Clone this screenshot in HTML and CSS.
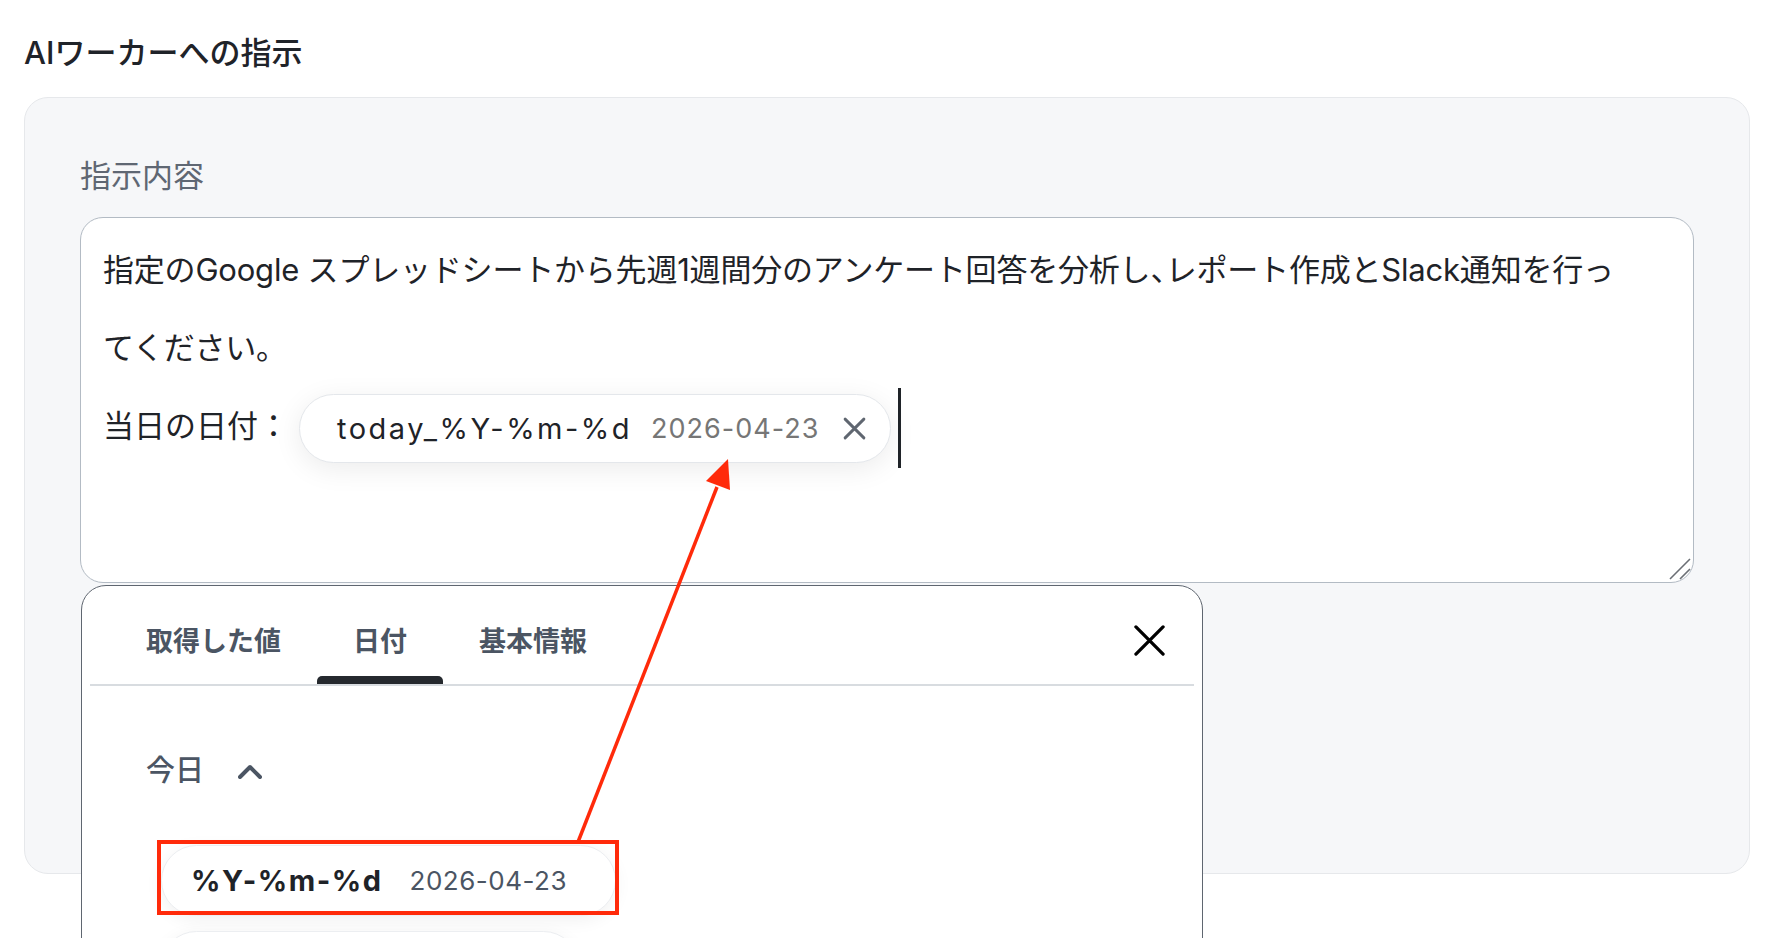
FILE: index.html
```html
<!DOCTYPE html>
<html lang="ja">
<head>
    <meta charset="UTF-8">
    <meta name="viewport" content="width=device-width, initial-scale=1.0">
    <title>AIワーカーへの指示</title>
    <link rel="stylesheet" href="styles.css">
</head>
<body>
    <div class="page">
        <h2 class="section-title">AIワーカーへの指示</h2>

        <div class="panel">
            <div class="field-label">指示内容</div>
            <div class="editor">
                <div class="editor-text">指定のGoogle スプレッドシートから先週1週間分のアンケート回答を分析し<span class="half">、</span>レポート作成とSlack通知を行っ<br>てください。</div>
                <div class="editor-line">
                    <span>当日の日付：</span>
                    <span class="var-chip">
                        <span class="var-name">today_%Y-%m-%d</span>
                        <span class="var-value">2026-04-23</span>
                        <svg class="var-remove" viewBox="0 0 24 24" width="25" height="25">
                            <path d="M3 3 L21 21 M21 3 L3 21" />
                        </svg>
                    </span>
                    <span class="caret"></span>
                </div>
                <svg class="resize-grip" viewBox="0 0 24 24" width="24" height="24">
                    <path d="M3 23 L23 3 M13 23 L23 13" />
                </svg>
            </div>
        </div>

        <!-- variable picker dropdown -->
        <div class="picker">
            <div class="picker-head">
                <div class="tabs">
                    <div class="tab">取得した値</div>
                    <div class="tab active">日付</div>
                    <div class="tab">基本情報</div>
                </div>
                <svg class="picker-close" viewBox="0 0 32 32" width="31" height="31">
                    <path d="M2 2 L30 30 M30 2 L2 30" />
                </svg>
            </div>
            <div class="picker-body">
                <div class="group-title">
                    <span>今日</span>
                    <svg viewBox="0 0 24 15" width="24" height="15">
                        <path d="M2 13 L12 3 L22 13" />
                    </svg>
                </div>
                <div class="options">
                    <div class="option">
                        <span class="option-name">%Y-%m-%d</span>
                        <span class="option-value">2026-04-23</span>
                    </div>
                    <div class="option option-next"></div>
                </div>
            </div>
        </div>

        <svg class="callout" width="1790" height="938" viewBox="0 0 1790 938">
            <rect x="159" y="842" width="458" height="71" />
            <line x1="578" y1="842" x2="717" y2="487" />
            <polygon points="728,459 730,490 706,481" />
        </svg>
    </div>
</body>
</html>
```

FILE: styles.css
```css
html, body {
    margin: 0;
    height: 100%;
    overflow: hidden;
}
body {
    font-family: Inter, "Noto Sans CJK JP", sans-serif;
    background: #ffffff;
    color: #1f2328;
}
.page {
    position: relative;
    padding: 31px 40px 0 24px;
}
.section-title {
    margin: 0 0 23px;
    font-size: 31px;
    line-height: 43px;
    font-weight: 500;
    color: #1f2329;
}
.panel {
    box-sizing: border-box;
    width: 1726px;
    height: 777px;
    padding: 56px 55px;
    background: #f6f7f9;
    border: 1px solid #e6e8eb;
    border-radius: 24px;
}
.field-label {
    font-size: 31px;
    line-height: 43px;
    color: #5f6773;
    margin-bottom: 20px;
}
.editor {
    position: relative;
    box-sizing: border-box;
    height: 366px;
    padding: 13px 22px 11px;
    background: #ffffff;
    border: 1.5px solid #b3bbc4;
    border-radius: 23px;
    font-size: 31px;
    line-height: 78px;
    color: #1f2328;
}
.editor-text {
    letter-spacing: -0.2px;
}
.half {
    font-feature-settings: "halt";
}
.editor-line {
    display: flex;
    align-items: center;
    height: 78px;
}
.var-chip {
    display: inline-flex;
    align-items: center;
    box-sizing: border-box;
    height: 69px;
    margin: 4px 0 0 10px;
    padding: 0 23px 0 37px;
    background: #ffffff;
    border: 1px solid #e4e7eb;
    border-radius: 35px;
    box-shadow: 0 6px 28px rgba(0, 0, 0, 0.08);
    line-height: 1;
}
.var-name {
    font-size: 29px;
    letter-spacing: 2.5px;
    color: #1f2328;
}
.var-value {
    margin-left: 19px;
    font-size: 27px;
    letter-spacing: 1px;
    color: #767676;
}
.var-remove {
    margin-left: 23px;
    fill: none;
    stroke: #5f6670;
    stroke-width: 2.8;
    stroke-linecap: round;
}
.caret {
    display: inline-block;
    width: 3px;
    height: 80px;
    margin: 3px 0 0 7px;
    background: #1f2328;
}
.resize-grip {
    position: absolute;
    right: 2px;
    bottom: 2px;
    fill: none;
    stroke: #6b6f75;
    stroke-width: 1.6;
}

/* dropdown */
.picker {
    position: absolute;
    left: 81px;
    top: 585px;
    box-sizing: border-box;
    width: 1122px;
    height: 420px;
    padding: 0 8px;
    background: #ffffff;
    border: 1.5px solid #5f6670;
    border-radius: 25px;
}
.picker-head {
    display: flex;
    border-bottom: 2px solid #d8dce0;
}
.tabs {
    display: flex;
    margin-left: 20px;
}
.tab {
    position: relative;
    padding: 38px 36px 24px;
    font-size: 27px;
    line-height: 36px;
    font-weight: 600;
    color: #4b5563;
}
.tab.active::after {
    content: "";
    position: absolute;
    left: 0;
    right: 0;
    bottom: 0;
    height: 8px;
    background: #25292e;
    border-radius: 5px 5px 0 0;
}
.picker-close {
    margin: 39px 29px 0 auto;
    fill: none;
    stroke: #000000;
    stroke-width: 3.4;
    stroke-linecap: round;
}
.picker-body {
    padding-left: 56px;
}
.group-title {
    display: flex;
    align-items: center;
    gap: 34px;
    margin-top: 65px;
    font-size: 29px;
    line-height: 40px;
    font-weight: 500;
    color: #4b5563;
}
.group-title svg {
    fill: none;
    stroke: #4b5563;
    stroke-width: 4;
    stroke-linecap: round;
    stroke-linejoin: round;
}
.options {
    display: flex;
    flex-direction: column;
    align-items: flex-start;
    gap: 15px;
    margin-top: 54px;
    padding-left: 15px;
}
.option {
    display: flex;
    align-items: center;
    box-sizing: border-box;
    height: 71px;
    padding: 0 48px 0 29px;
    background: #ffffff;
    border: 1px solid #eceef1;
    border-radius: 36px;
    box-shadow: 0 4px 18px rgba(0, 0, 0, 0.06);
}
.option-next {
    width: 418px;
}
.option-name {
    font-size: 29px;
    font-weight: 700;
    letter-spacing: 1.5px;
    color: #1f2328;
}
.option-value {
    margin-left: 27px;
    font-size: 26px;
    letter-spacing: 0.5px;
    color: #4b5563;
}

/* annotation overlay */
.callout {
    position: absolute;
    left: 0;
    top: 0;
    pointer-events: none;
}
.callout rect {
    fill: none;
    stroke: #ff2a0a;
    stroke-width: 4;
}
.callout line {
    stroke: #ff2a0a;
    stroke-width: 3.5;
}
.callout polygon {
    fill: #ff2a0a;
}
```
